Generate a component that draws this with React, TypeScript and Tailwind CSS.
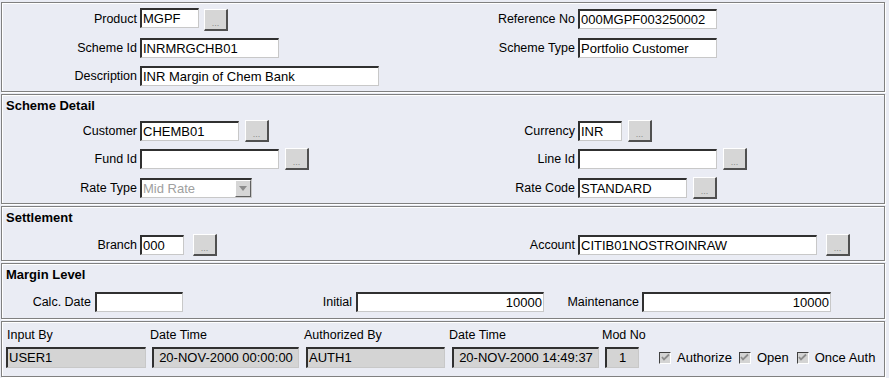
import React from "react";

const font = { fontFamily: '"Liberation Sans", Arial, sans-serif' };

function Inp({ w, value = "", right = false, gray = false, center = false, h = 20 }: { w: number; value?: string; right?: boolean; gray?: boolean; center?: boolean; h?: number }) {
  return (
    <div
      className={`shrink-0 border-t-2 border-l-2 border-t-[#303030] border-l-[#303030] border-b border-r border-b-[#c8c8c8] border-r-[#c8c8c8] text-[13px] leading-[17px] text-black whitespace-nowrap overflow-hidden ${gray ? "bg-[#d4d4d4]" : "bg-white"} ${right ? "text-right pr-[1px]" : center ? "text-center" : "pl-[1px]"}`}
      style={{ width: w, height: h }}
    >
      {value}
    </div>
  );
}

function Btn({ ml }: { ml: number }) {
  return (
    <div
      className="w-[24px] h-[22px] shrink-0 bg-[#d6d6d6] border-t border-l border-t-white border-l-white border-b-2 border-r-2 border-b-[#505050] border-r-[#505050] flex items-end justify-center pb-[1px]"
      style={{ marginLeft: ml }}
    >
      <span className="text-[9px] leading-[9px] text-[#8a8a8a]">...</span>
    </div>
  );
}

function Label({ w, children }: { w: number; children: React.ReactNode }) {
  return (
    <div className="shrink-0 text-right text-[12.5px] text-black whitespace-nowrap" style={{ width: w }}>
      {children}
    </div>
  );
}

function Panel({ h, children }: { h: number; children: React.ReactNode }) {
  return (
    <div
      className="w-[884px] border border-[#808080] shadow-[inset_1px_1px_0_#fff,1px_1px_0_#fff] bg-[#eaecf4] relative"
      style={{ height: h }}
    >
      {children}
    </div>
  );
}

function Heading({ children }: { children: React.ReactNode }) {
  return <div className="pl-[4px] pt-[3px] h-[22px] text-[13px] font-bold text-black leading-[16px]">{children}</div>;
}

function Check({ label, ml }: { label: string; ml: number }) {
  return (
    <div className="flex items-center shrink-0" style={{ marginLeft: ml }}>
      <div className="w-[12px] h-[12px] bg-[#d4d4d4] border-t border-l border-t-[#404040] border-l-[#404040] border-b border-r border-b-white border-r-white flex items-center justify-center">
        <svg width="9" height="9" viewBox="0 0 9 9">
          <path d="M1 4 L3 6.5 L8 1.5" stroke="#8c8c8c" strokeWidth="1.8" fill="none" />
        </svg>
      </div>
      <span className="ml-[6px] text-[13px] text-black whitespace-nowrap">{label}</span>
    </div>
  );
}

export default function App() {
  return (
    <div className="w-[889px] h-[378px] bg-[#eaecf4] pt-[2px] pl-[1px] flex flex-col gap-[2px] overflow-hidden" style={font}>
      {/* Panel 1 */}
      <Panel h={90}>
        <div className="pt-[6px] flex flex-col">
          <div className="flex items-center h-[20px]">
            <div className="flex items-center w-[438px]">
              <Label w={135}>Product</Label>
              <div className="ml-[3px] flex items-start">
                <Inp w={59} value="MGPF" />
                <div className="mt-[1px]"><Btn ml={5} /></div>
              </div>
            </div>
            <Label w={135}>Reference No</Label>
            <div className="ml-[3px]"><Inp w={139} value="000MGPF003250002" /></div>
          </div>
          <div className="flex items-center h-[20px] mt-[9px]">
            <div className="flex items-center w-[438px]">
              <Label w={135}>Scheme Id</Label>
              <div className="ml-[3px]"><Inp w={139} value="INRMRGCHB01" /></div>
            </div>
            <Label w={135}>Scheme Type</Label>
            <div className="ml-[3px]"><Inp w={139} value="Portfolio Customer" /></div>
          </div>
          <div className="flex items-center h-[20px] mt-[8px]">
            <Label w={135}>Description</Label>
            <div className="ml-[3px]"><Inp w={239} value="INR Margin of Chem Bank" /></div>
          </div>
        </div>
      </Panel>

      {/* Panel 2 */}
      <Panel h={110}>
        <Heading>Scheme Detail</Heading>
        <div className="flex flex-col pt-[4px]">
          <div className="flex items-center h-[20px]">
            <div className="flex items-center w-[438px]">
              <Label w={135}>Customer</Label>
              <div className="ml-[3px] flex items-center">
                <Inp w={99} value="CHEMB01" />
                <Btn ml={6} />
              </div>
            </div>
            <Label w={135}>Currency</Label>
            <div className="ml-[3px] flex items-center">
              <Inp w={44} value="INR" />
              <Btn ml={6} />
            </div>
          </div>
          <div className="flex items-center h-[20px] mt-[8px]">
            <div className="flex items-center w-[438px]">
              <Label w={135}>Fund Id</Label>
              <div className="ml-[3px] flex items-center">
                <Inp w={139} />
                <Btn ml={6} />
              </div>
            </div>
            <Label w={135}>Line Id</Label>
            <div className="ml-[3px] flex items-center">
              <Inp w={139} />
              <Btn ml={6} />
            </div>
          </div>
          <div className="flex items-center h-[20px] mt-[9px]">
            <div className="flex items-center w-[438px]">
              <Label w={135}>Rate Type</Label>
              <div className="ml-[3px] w-[112px] h-[20px] bg-white border-t-2 border-l-2 border-t-[#303030] border-l-[#303030] border-b border-r border-b-[#c8c8c8] border-r-[#c8c8c8] flex items-center">
                <span className="pl-[1px] flex-1 text-[13px] text-[#a0a0a0] leading-[17px]">Mid Rate</span>
                <div className="w-[16px] h-[17px] bg-[#d6d6d6] border-t border-l border-t-white border-l-white border-b border-r border-b-[#606060] border-r-[#606060] flex items-center justify-center">
                  <svg width="8" height="5" viewBox="0 0 8 5"><path d="M0 0 L8 0 L4 5 Z" fill="#8c8c8c" /></svg>
                </div>
              </div>
            </div>
            <Label w={135}>Rate Code</Label>
            <div className="ml-[3px] flex items-center">
              <Inp w={109} value="STANDARD" />
              <Btn ml={6} />
            </div>
          </div>
        </div>
      </Panel>

      {/* Panel 3 */}
      <Panel h={55}>
        <Heading>Settlement</Heading>
        <div className="flex items-center h-[20px] mt-[6px]">
          <div className="flex items-center w-[438px]">
            <Label w={135}>Branch</Label>
            <div className="ml-[3px] flex items-center">
              <Inp w={44} value="000" />
              <Btn ml={9} />
            </div>
          </div>
          <Label w={135}>Account</Label>
          <div className="ml-[3px] flex items-center">
            <Inp w={239} value="CITIB01NOSTROINRAW" />
            <Btn ml={9} />
          </div>
        </div>
      </Panel>

      {/* Panel 4 */}
      <Panel h={56}>
        <Heading>Margin Level</Heading>
        <div className="flex items-center h-[20px] mt-[6px]">
          <Label w={89}>Calc. Date</Label>
          <div className="ml-[4px]"><Inp w={88} /></div>
          <Label w={169}>Initial</Label>
          <div className="ml-[4px]"><Inp w={188} value="10000" right /></div>
          <Label w={95}>Maintenance</Label>
          <div className="ml-[3px]"><Inp w={189} value="10000" right /></div>
        </div>
      </Panel>

      {/* Panel 5 */}
      <Panel h={56}>
        <div className="flex pl-[4px] pt-[4px] text-[12.5px] text-black h-[25px] whitespace-nowrap">
          <div className="w-[144px] pl-[1px] shrink-0">Input By</div>
          <div className="w-[154px] shrink-0">Date Time</div>
          <div className="w-[145px] shrink-0">Authorized By</div>
          <div className="w-[153px] shrink-0">Date Time</div>
          <div className="w-[60px] shrink-0">Mod No</div>
        </div>
        <div className="flex items-center pl-[4px] h-[21px]">
          <Inp w={140} value="USER1" gray h={21} />
          <div className="ml-[6px]"><Inp w={147} value="20-NOV-2000 00:00:00" gray center h={21} /></div>
          <div className="ml-[7px]"><Inp w={139} value="AUTH1" gray h={21} /></div>
          <div className="ml-[7px]"><Inp w={147} value="20-NOV-2000 14:49:37" gray center h={21} /></div>
          <div className="ml-[6px]"><Inp w={34} value="1" gray center h={21} /></div>
          <Check label="Authorize" ml={20} />
          <Check label="Open" ml={7} />
          <Check label="Once Auth" ml={8} />
        </div>
      </Panel>
    </div>
  );
}
